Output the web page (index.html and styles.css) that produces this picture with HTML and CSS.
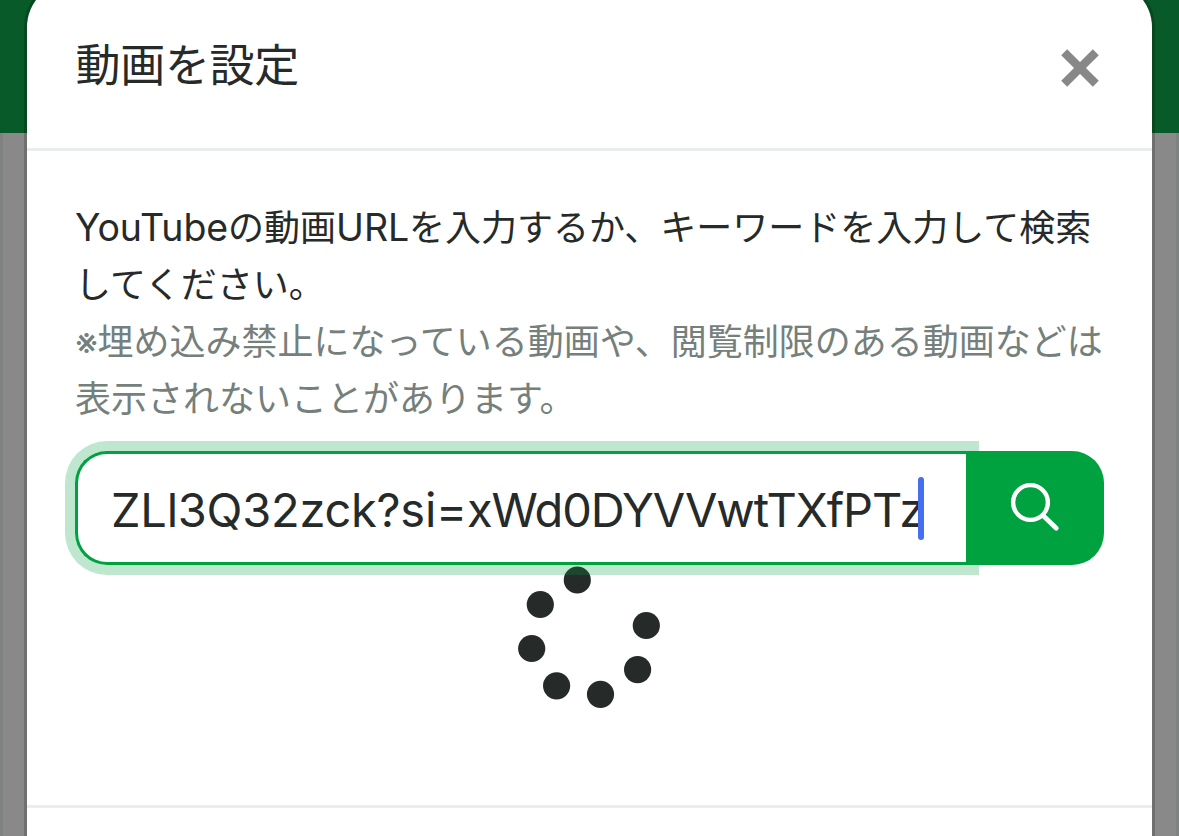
FILE: index.html
```
<!DOCTYPE html>
<html lang="ja">
<head>
    <meta charset="UTF-8">
    <title>動画を設定</title>
    <link rel="stylesheet" href="styles.css">
</head>
<body>
<div class="modal">
    <div class="modal-header">
        <h1 class="modal-title">動画を設定</h1>
        <svg class="close" width="38" height="38" viewBox="0 0 38 38">
            <path d="M3.2 3.2L34.8 34.8M34.8 3.2L3.2 34.8" fill="none" stroke="#888" stroke-width="8.4"/>
        </svg>
    </div>
    <div class="modal-body">
        <p class="text"><span class="latin">YouTube</span>の動画<span class="latin">URL</span>を入力するか、キーワードを入力して検索<br>してください。</p>
        <p class="text note"><span class="mark">※</span>埋め込み禁止になっている動画や、閲覧制限のある動画などは<br>表示されないことがあります。</p>
        <div class="search">
            <div class="search-input"><span class="search-value"><span class="query">ZLl3Q32zck?si=</span>xWd0DYVVwtTXfPTz</span><span class="caret"></span></div>
            <div class="search-button">
                <svg width="50" height="50" viewBox="0 0 50 50" fill="none" stroke="#fff">
                    <circle cx="20.5" cy="20.5" r="17.4" stroke-width="4.4"/>
                    <path d="M33 33.5L46.3 46.2" stroke-width="4.8" stroke-linecap="round"/>
                </svg>
            </div>
        </div>
        <div class="loading">
            <svg width="142" height="142" viewBox="0 0 142 142" fill="#262a29">
                <circle cx="59.3" cy="14" r="13.6"/>
                <circle cx="22.3" cy="38.5" r="13.6"/>
                <circle cx="13.7" cy="82.5" r="13.6"/>
                <circle cx="38.6" cy="119.8" r="13.6"/>
                <circle cx="82.5" cy="128.3" r="13.6"/>
                <circle cx="119.6" cy="103.6" r="13.6"/>
                <circle cx="128.3" cy="59.5" r="13.6"/>
            </svg>
        </div>
    </div>
    <div class="modal-footer"></div>
</div>
</body>
</html>
```
FILE: styles.css
```
* {
    margin: 0;
    padding: 0;
    box-sizing: border-box;
}
body {
    height: 836px;
    overflow: hidden;
    background: linear-gradient(#085a29 133px, transparent 133px),
        linear-gradient(90deg, #7e8280 3px, #898989 3px, #898989 1176px, #7e8280 1176px);
    font-family: "Inter", "Noto Sans CJK JP", sans-serif;
    color: #262a29;
}
.modal {
    width: 1131px;
    height: 857px;
    margin: -21px 0 0 24px;
    border: 3px solid rgba(0, 0, 0, .18);
    border-bottom: 0;
    border-radius: 48px 48px 0 0;
    background: #fff;
    background-clip: padding-box;
}
.modal-header {
    display: flex;
    justify-content: space-between;
    align-items: flex-start;
    height: 169px;
    padding: 48px 53.5px 0 48.5px;
    border-bottom: 3px solid #e9eded;
}
.modal-title {
    font-family: "Noto Sans CJK JP", sans-serif;
    font-size: 45px;
    font-weight: 400;
    line-height: 66px;
    letter-spacing: -.3px;
}
.close {
    display: block;
    margin-top: 18.5px;
}
.modal-body {
    height: 654px;
    padding: 46px 48px 0;
}
.text {
    font-family: "Noto Sans CJK JP", sans-serif;
    font-size: 36px;
    line-height: 57px;
    white-space: nowrap;
}
.latin {
    font-family: "Inter", sans-serif;
    font-size: 37.5px;
    line-height: 1;
    letter-spacing: -.1px;
}
.note {
    color: #757f7b;
}
.mark {
    font-family: "Inter", "Noto Sans CJK JP", sans-serif;
    line-height: 1;
    letter-spacing: -.5px;
}
/* フォーカス中の入力欄 */
.search {
    display: flex;
    height: 114px;
    margin-top: 26px;
}
.search-input {
    position: relative;
    z-index: 1;
    display: flex;
    align-items: center;
    flex: none;
    width: 894px;
    padding: 3px 0 0 33px;
    border: 3px solid #00a13f;
    border-right: 0;
    border-radius: 32px 0 0 32px;
    box-shadow: 0 0 0 10px rgba(0, 161, 63, .25);
}
.search-value {
    font-size: 47px;
    line-height: 60px;
    letter-spacing: -1.05px;
    white-space: nowrap;
}
.query {
    letter-spacing: -.25px;
}
.caret {
    position: absolute;
    left: 840px;
    top: 23px;
    width: 6px;
    height: 63px;
    border-radius: 3px;
    background: #456ef0;
}
.search-button {
    position: relative;
    z-index: 2;
    width: 138px;
    margin-left: -3px;
    padding: 31px 0 0 44px;
    border-radius: 0 32px 32px 0;
    background: #00a13f;
}
.loading {
    display: flex;
    justify-content: center;
    padding: 1px 2px 0 0;
}
.modal-footer {
    height: 31px;
    border-top: 3px solid #ededed;
}
```
